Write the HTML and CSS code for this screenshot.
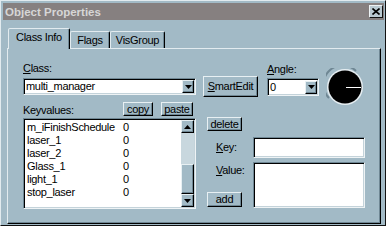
FILE: index.html
```html
<!DOCTYPE html>
<html lang="en">
<head>
  <meta charset="UTF-8" />
  <title>Object Properties</title>
  <link rel="stylesheet" href="styles.css">
</head>
<body>
  <div class="window">
    <div class="titlebar">
      <span class="title">Object Properties</span>
      <span class="close">
        <svg width="8" height="7" viewBox="0 0 8 7"><path d="M0.5 0.5 L7.5 6.5 M7.5 0.5 L0.5 6.5" stroke="#000" stroke-width="1.6"/></svg>
      </span>
    </div>

    <div class="tabs">
      <div class="tab active">Class Info</div>
      <div class="tab flags">Flags</div>
      <div class="tab visgroup">VisGroup</div>
    </div>

    <div class="panel">
      <div class="left">
        <div class="lbl"><u>C</u>lass:</div>
        <div class="combo sunken">
          <span class="combo-text">multi_manager</span>
          <span class="drop raised">
            <svg width="7" height="4" viewBox="0 0 7 4"><polygon points="0,0 7,0 3.5,4" fill="#000"/></svg>
          </span>
        </div>

        <div class="kv-head">
          <span class="lbl">Keyvalues:</span>
          <button class="btn copy">copy</button>
          <button class="btn paste">paste</button>
        </div>

        <div class="listbox sunken">
          <div class="rows">
            <div class="row"><span class="k">m_iFinishSchedule</span><span>0</span></div>
            <div class="row"><span class="k">laser_1</span><span>0</span></div>
            <div class="row"><span class="k">laser_2</span><span>0</span></div>
            <div class="row"><span class="k">Glass_1</span><span>0</span></div>
            <div class="row"><span class="k">light_1</span><span>0</span></div>
            <div class="row"><span class="k">stop_laser</span><span>0</span></div>
          </div>
          <div class="scroll">
            <span class="sb-btn raised">
              <svg width="7" height="4" viewBox="0 0 7 4"><polygon points="0,4 7,4 3.5,0" fill="#000"/></svg>
            </span>
            <div class="track"><span class="thumb raised"></span></div>
            <span class="sb-btn raised">
              <svg width="7" height="4" viewBox="0 0 7 4"><polygon points="0,0 7,0 3.5,4" fill="#000"/></svg>
            </span>
          </div>
        </div>
      </div>

      <div class="right">
        <div class="top-row">
          <button class="btn smart"><u>S</u>martEdit</button>
          <div class="angle">
            <div class="lbl"><u>A</u>ngle:</div>
            <div class="combo small sunken">
              <span class="combo-text">0</span>
              <span class="drop raised">
                <svg width="7" height="4" viewBox="0 0 7 4"><polygon points="0,0 7,0 3.5,4" fill="#000"/></svg>
              </span>
            </div>
          </div>
          <svg class="dial" width="38" height="38" viewBox="0 0 38 38">
            <circle cx="19" cy="19" r="18" fill="#e6eef2"/>
            <path d="M3 30 A18 18 0 0 1 30 3" stroke="#6f8794" stroke-width="2" fill="none"/>
            <circle cx="19" cy="19" r="16.5" fill="#000"/>
            <line x1="20" y1="19.5" x2="35" y2="19.5" stroke="#fff" stroke-width="1"/>
          </svg>
        </div>

        <button class="btn delete">delete</button>

        <div class="kv-edit">
          <div class="lbl key-lbl"><u>K</u>ey:</div>
          <div class="field sunken"></div>
          <div class="value-cell">
            <div class="lbl value-lbl"><u>V</u>alue:</div>
            <button class="btn add">add</button>
          </div>
          <div class="field sunken"></div>
        </div>
      </div>
    </div>
  </div>
</body>
</html>
```

FILE: styles.css
```css
* {
  margin: 0;
  padding: 0;
  box-sizing: border-box;
}

body {
  background: #fff;
  font-family: "Liberation Sans", Arial, sans-serif;
  font-size: 11px;
  letter-spacing: -0.3px;
  color: #000;
}

.window {
  width: 386px;
  height: 226px;
  background: #a2bac6;
  border-top: 1px solid #e2ebef;
  border-left: 1px solid #e2ebef;
  border-right: 1px solid #111;
  border-bottom: 1px solid #111;
}

.titlebar {
  margin: 2px 1px 0 2px;
  height: 17px;
  background: #868080;
  display: flex;
  align-items: center;
  justify-content: space-between;
  padding: 0 1px 0 2px;
}

.title {
  color: #d6d6d6;
  font-weight: bold;
  font-size: 11.5px;
  letter-spacing: 0;
}

.close {
  width: 14px;
  height: 13px;
  background: #b9c9d1;
  border: 1px solid;
  border-color: #eef3f5 #111 #111 #eef3f5;
  display: flex;
  align-items: center;
  justify-content: center;
}

/* tabs */
.tabs {
  display: flex;
  align-items: flex-end;
  height: 20px;
  margin: 8px 0 0 7px;
}

.tab {
  height: 17px;
  line-height: 16px;
  text-align: center;
  border: 1px solid;
  border-bottom: none;
  border-color: #e2ebef #000 transparent #e2ebef;
  border-radius: 2px 2px 0 0;
  box-shadow: inset -1px 0 0 #6f8794;
}

.tab.active {
  width: 62px;
  height: 21px;
  line-height: 17px;
  margin-bottom: -1px;
  position: relative;
  z-index: 1;
  background: #a2bac6;
}

.tab.flags { width: 40px; }
.tab.visgroup { width: 55px; }

.panel {
  margin-left: 6px;
  width: 374px;
  height: 176px;
  border: 1px solid;
  border-color: #e2ebef #000 #000 #e2ebef;
  box-shadow: inset -1px -1px 0 #6f8794;
  padding: 13px 0 0 15px;
  display: flex;
  gap: 7px;
}

/* shared bits */
.lbl {
  line-height: 13px;
}

.raised {
  background: #a2bac6;
  border: 1px solid;
  border-color: #e8f0f3 #000 #000 #e8f0f3;
  box-shadow: inset -1px -1px 0 #6f8794;
}

.sunken {
  background: #fff;
  border: 1px solid;
  border-color: #6f8794 #eef3f5 #eef3f5 #6f8794;
  padding: 1px;
  box-shadow: inset 1px 1px 0 #000, inset -1px -1px 0 #c4d3da;
}

.btn {
  font: inherit;
  letter-spacing: inherit;
  color: #000;
  background: #a2bac6;
  border: 1px solid;
  border-color: #e8f0f3 #000 #000 #e8f0f3;
  box-shadow: inset -1px -1px 0 #6f8794;
  height: 14px;
  line-height: 11px;
}

/* left column */
.left {
  width: 173px;
  display: flex;
  flex-direction: column;
}

.combo {
  margin-top: 3px;
  height: 17px;
  display: flex;
  align-items: center;
  justify-content: space-between;
}

.combo-text {
  padding-left: 1px;
  line-height: 13px;
}

.drop {
  width: 12px;
  height: 13px;
  display: flex;
  align-items: center;
  justify-content: center;
}

.kv-head {
  margin-top: 7px;
  height: 14px;
  display: flex;
  align-items: flex-end;
}

.kv-head .lbl {
  flex: 1;
  line-height: 11px;
}

.copy { width: 30px; }

.paste {
  width: 32px;
  margin: 0 3px 0 8px;
}

.listbox {
  margin-top: 2px;
  height: 91px;
  display: flex;
}

.rows {
  flex: 1;
  padding: 1px 0 0 2px;
}

.row {
  display: flex;
  line-height: 13px;
}

.row .k {
  width: 96px;
}

.scroll {
  width: 13px;
  display: flex;
  flex-direction: column;
}

.sb-btn {
  height: 13px;
  display: flex;
  align-items: center;
  justify-content: center;
}

.track {
  flex: 1;
  background: #c8d7de;
  display: flex;
  flex-direction: column;
  justify-content: flex-end;
}

.thumb {
  height: 30px;
}

/* right column */
.right {
  display: flex;
  flex-direction: column;
}

.top-row {
  display: flex;
  align-items: flex-start;
  height: 44px;
}

.smart {
  margin-top: 14px;
  width: 55px;
  height: 21px;
}

.angle {
  margin-left: 9px;
  padding-top: 1px;
  display: flex;
  flex-direction: column;
}

.combo.small {
  margin-top: 2px;
  width: 52px;
  height: 18px;
}

.dial {
  margin: 6px 0 0 7px;
}

.delete {
  margin: 11px 0 0 4px;
  width: 35px;
}

.kv-edit {
  margin: 6px 0 0 4px;
  display: grid;
  grid-template-columns: 46px 112px;
  grid-template-rows: 21px 46px;
  row-gap: 4px;
}

.key-lbl {
  align-self: center;
  padding-left: 9px;
}

.value-cell {
  display: flex;
  flex-direction: column;
  justify-content: space-between;
}

.value-lbl {
  margin-top: 2px;
  padding-left: 9px;
}

.add {
  width: 35px;
  height: 15px;
  margin-bottom: 1px;
}
```
